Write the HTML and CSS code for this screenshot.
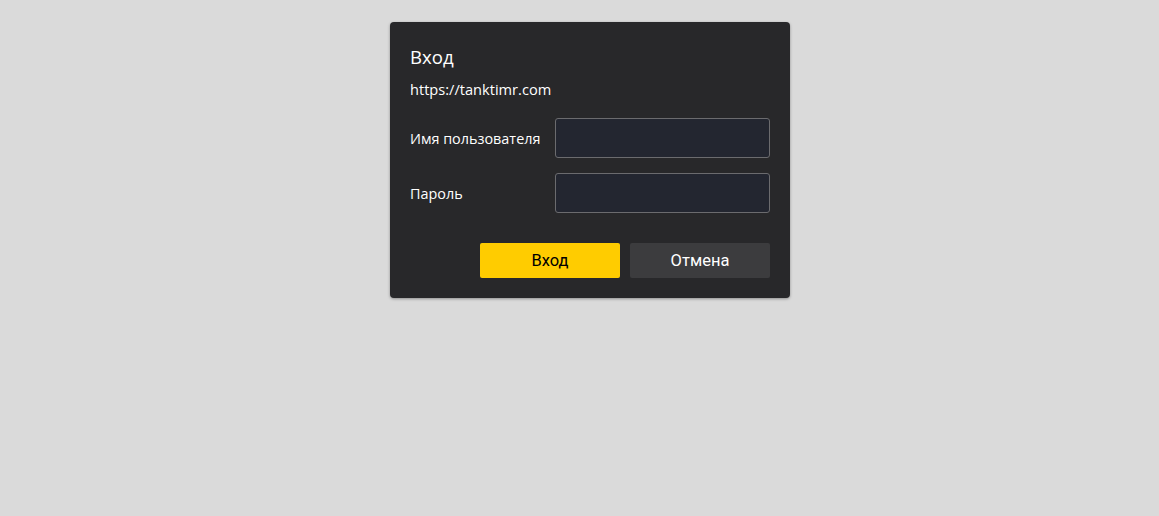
FILE: index.html
```html
<!DOCTYPE html>
<html lang="ru">
<head>
<meta charset="utf-8">
<link rel="stylesheet" href="styles.css">
<title>Вход</title>
</head>
<body>
<div class="page">
  <form class="dialog">
    <h1 class="title">Вход</h1>
    <div class="origin">https://tanktimr.com</div>
    <div class="fields">
      <label class="row">
        <span class="label">Имя пользователя</span>
        <input class="input" type="text">
      </label>
      <label class="row">
        <span class="label">Пароль</span>
        <input class="input" type="password">
      </label>
    </div>
    <div class="actions">
      <button type="button" class="btn btn-primary">Вход</button>
      <button type="button" class="btn btn-secondary">Отмена</button>
    </div>
  </form>
</div>
</body>
</html>
```

FILE: styles.css
```css
html, body {
  margin: 0;
  padding: 0;
  background: #dadada;
  height: 100%;
}

body {
  font-family: "Open Sans", "Noto Sans", sans-serif;
  color: #fff;
}

.page {
  display: flex;
  justify-content: center;
  padding: 22px 0 0 21px;
}

.dialog {
  width: 400px;
  box-sizing: border-box;
  background: #28282a;
  border-radius: 4px;
  box-shadow: 0 1px 3px rgba(0, 0, 0, 0.35);
  padding: 22px 20px 20px;
  display: flex;
  flex-direction: column;
}

.title {
  margin: 0;
  font-size: 18.6px;
  font-weight: 400;
  line-height: 26px;
}

.origin {
  margin-top: 9px;
  font-size: 14.6px;
  line-height: 20px;
}

.fields {
  margin-top: 19px;
  display: flex;
  flex-direction: column;
  gap: 15px;
}

.row {
  display: flex;
  align-items: center;
  justify-content: space-between;
}

.label {
  font-size: 14.4px;
}

.input {
  width: 215px;
  height: 40px;
  box-sizing: border-box;
  background: #232630;
  border: 1px solid #6b6b6e;
  border-radius: 3px;
  color: #fff;
  font: inherit;
  padding: 0 8px;
  outline: none;
}

.actions {
  margin-top: 30px;
  display: flex;
  justify-content: flex-end;
  gap: 10px;
}

.btn {
  width: 140px;
  height: 35px;
  border: 0;
  border-radius: 2px;
  font-family: Roboto, "Open Sans", sans-serif;
  font-size: 16.5px;
  cursor: pointer;
}

.btn-primary {
  background: #ffcc00;
  color: #000;
}

.btn-secondary {
  background: #3c3c3e;
  color: #fff;
}
```
